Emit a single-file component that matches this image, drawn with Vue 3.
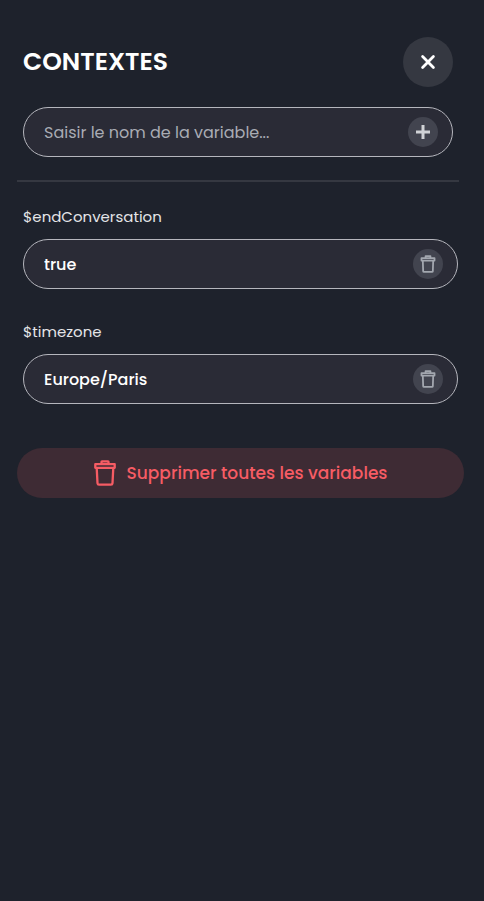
<script setup>
import { ref } from 'vue'

const draft = ref('')
const variables = ref([
  { name: 'endConversation', value: 'true' },
  { name: 'timezone', value: 'Europe/Paris' },
])

function addVariable() {
  const name = draft.value.trim()
  if (!name) return
  variables.value.push({ name, value: '' })
  draft.value = ''
}

function removeVariable(index) {
  variables.value.splice(index, 1)
}
</script>

<template>
  <main class="panel">
    <header class="header">
      <h1 class="title">CONTEXTES</h1>
      <button class="close" type="button" aria-label="Fermer">
        <svg width="16" height="16" viewBox="0 0 16 16" fill="none" stroke="currentColor" stroke-width="2.8" stroke-linecap="round">
          <path d="M2.6 2.6 13.4 13.4M13.4 2.6 2.6 13.4" />
        </svg>
      </button>
    </header>

    <form class="field add" @submit.prevent="addVariable">
      <input v-model="draft" class="input" type="text" placeholder="Saisir le nom de la variable..." aria-label="Nom de la variable" />
      <button class="round plus" type="submit" aria-label="Ajouter">
        <svg width="14" height="14" viewBox="0 0 14 14" fill="none" stroke="currentColor" stroke-width="3">
          <path d="M7 0V14M0 7H14" />
        </svg>
      </button>
    </form>

    <hr class="divider" />

    <section class="list">
      <div v-for="(variable, index) in variables" :key="variable.name" class="variable">
        <label class="label" :for="'var-' + variable.name">${{ variable.name }}</label>
        <div class="field">
          <input :id="'var-' + variable.name" v-model="variable.value" class="input" type="text" />
          <button class="round" type="button" :aria-label="'Supprimer ' + variable.name" @click="removeVariable(index)">
            <svg width="16" height="18" viewBox="0 0 22 26" fill="none" stroke="currentColor" stroke-width="2.6" stroke-linejoin="round">
              <path d="M1.6 4.4H20.4V8H1.6ZM7.5 4.4V1.5H14.5V4.4M3.5 8 4 23.2Q4.1 24.5 5.3 24.5H16.7Q17.9 24.5 18 23.2L18.5 8" />
            </svg>
          </button>
        </div>
      </div>
    </section>

    <button class="clear" type="button" @click="variables = []">
      <svg width="22" height="26" viewBox="0 0 22 26" fill="none" stroke="currentColor" stroke-width="2.3" stroke-linejoin="round">
        <path d="M1.3 4.2H20.7V7.8H1.3ZM7.5 4.2V1.8Q7.5 1.3 8 1.3H14Q14.5 1.3 14.5 1.8V4.2M2.7 7.8 3.5 23.2Q3.6 24.7 5 24.7H17Q18.4 24.7 18.5 23.2L19.3 7.8" />
      </svg>
      <span>Supprimer toutes les variables</span>
    </button>
  </main>
</template>

<style>
body {
  margin: 0;
  background: #1e222c;
}
</style>

<style scoped>
.panel {
  box-sizing: border-box;
  min-height: 100vh;
  padding: 37px 20px 37px 17px;
  display: flex;
  flex-direction: column;
  background: #1e222c;
  color: #fff;
  font-family: Poppins, Inter, "Liberation Sans", sans-serif;
}

button,
input {
  margin: 0;
  border: 0;
  padding: 0;
  font: inherit;
}

button {
  display: flex;
  align-items: center;
  justify-content: center;
  cursor: pointer;
}

.header {
  display: flex;
  align-items: center;
  justify-content: space-between;
  padding: 0 11px 0 6px;
}

.title {
  margin: 0;
  font-size: 25px;
  line-height: 32px;
  font-weight: 600;
}

.close {
  width: 50px;
  height: 50px;
  border-radius: 50%;
  background: #353841;
  color: #fff;
}

.field {
  box-sizing: border-box;
  height: 50px;
  display: flex;
  align-items: center;
  padding: 0 14px 0 20px;
  border: 1px solid #b5b6bd;
  border-radius: 25px;
  background: #2a2b36;
}

.add {
  margin: 20px 11px 0 6px;
}

.input {
  flex: 1;
  min-width: 0;
  height: 100%;
  background: transparent;
  outline: none;
  color: #fff;
  font-size: 16px;
  font-weight: 500;
}

.input::placeholder {
  color: #a9acb4;
  font-weight: 400;
  opacity: 1;
}

.round {
  width: 30px;
  height: 30px;
  flex: none;
  border-radius: 50%;
  background: #42444f;
  color: #a3a7af;
}

.plus {
  color: #d0d2d6;
}

.divider {
  width: 100%;
  max-width: calc(100% - 5px);
  height: 2px;
  margin: 23px 0 24px;
  border: 0;
  background: #353841;
}

.list {
  display: flex;
  flex-direction: column;
  gap: 32px;
  padding: 0 6px;
}

.variable {
  display: flex;
  flex-direction: column;
  gap: 11px;
}

.label {
  color: #e4e5e8;
  font-size: 15px;
  line-height: 22px;
}

.clear {
  gap: 11px;
  height: 50px;
  margin-top: 44px;
  border-radius: 25px;
  background: #3e2b34;
  color: #f65c64;
  font-size: 17px;
  font-weight: 500;
}
</style>
